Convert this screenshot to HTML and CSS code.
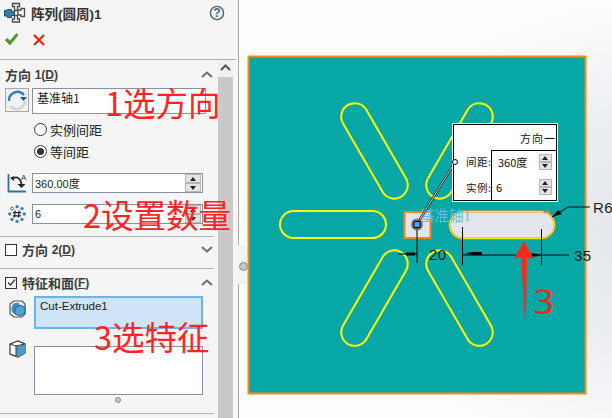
FILE: index.html
```html
<!DOCTYPE html>
<html lang="zh">
<head>
<meta charset="utf-8">
<title>阵列(圆周)1</title>
<link rel="stylesheet" href="styles.css">
</head>
<body>
<div class="app">
  <aside class="panel">
    <header class="panel-head">
      <div class="title-row">
        <svg class="title-icon" width="22" height="21" viewBox="0 0 22 21">
          <path d="M.5 8.500h3V7.500h4V9.500h3v4h-3v2h-4V14h-3z" fill="#2f7fa8" stroke="#1d4f6c"/>
          <path d="M8.500 1.500h7v3h-2v4h-3v-4h-2zM14 8h3V6.500h3.500v8H17V13h-3zM8.500 20v-3h2v-3.500h3V17h2v3z" fill="#f6f6f6" stroke="#4c4c4c" stroke-width="1.300"/>
        </svg>
        <h1 class="title">阵列(圆周)1</h1>
        <svg class="help" width="16" height="16" viewBox="0 0 16 16">
          <circle cx="8" cy="8" r="6.600" fill="#eef2f6" stroke="#55606c" stroke-width="1.400"/>
          <text x="8" y="12" text-anchor="middle" class="help-q">?</text>
        </svg>
      </div>
      <div class="action-row">
        <svg width="15" height="13" viewBox="0 0 15 13"><path d="M1 7l2.500-1.500L6 8l6.500-7.500L14 2 6 12z" fill="#46a01e" stroke="#2f7d12" stroke-width=".5"/></svg>
        <svg class="cancel" width="12" height="12" viewBox="0 0 12 12"><path d="M1 1l10 10M11 1L1 11" stroke="#e0280c" stroke-width="2.200"/></svg>
      </div>
    </header>
    <div class="panel-body">
      <div class="content">
        <section class="group group-one">
          <div class="group-head">
            <span class="group-title">方向 <small>1(<u>D</u>)</small></span>
            <svg class="chev" width="12" height="7" viewBox="0 0 12 7"><path d="M1 6l5-4.500L11 6" fill="none" stroke="#6e6e6e" stroke-width="2"/></svg>
          </div>
          <div class="row">
            <div class="icon-btn">
              <svg width="22" height="22" viewBox="0 0 22 22">
                <path d="M3 12a8.500 8.500 0 0 1 15-6" fill="none" stroke="#2f7fb0" stroke-width="2.400"/>
                <path d="M19 12a8.500 8.500 0 0 1-15 5" fill="none" stroke="#d2d2d2" stroke-width="2.400"/>
                <path d="M14 8h7l-3.500 4z" fill="#1f5f85"/>
              </svg>
            </div>
            <div class="field tall">基准轴1</div>
          </div>
          <label class="radio first"><span class="dot"></span>实例间距</label>
          <label class="radio"><span class="dot on"></span>等间距</label>
          <div class="row num first-num">
            <svg class="num-icon" width="20" height="20" viewBox="0 0 20 20">
              <path d="M1.500 1v17.500H19" fill="none" stroke="#2a74a5" stroke-width="1.800"/>
              <path d="M5 6c4-3 8-2 9.500 5" fill="none" stroke="#222" stroke-width="1.800"/>
              <path d="M3 5l4-2v5zM10.500 11h8l-4 4z" fill="#222"/>
              <text x="14" y="7" class="deg-a">A</text>
            </svg>
            <div class="field spin"><span>360.00度</span><span class="spinner"><i class="up"></i><i class="down"></i></span></div>
          </div>
          <div class="row num second-num">
            <svg class="num-icon" width="20" height="20" viewBox="0 0 22 22">
              <g fill="#3f7ea6">
                <circle cx="11" cy="3" r="1.800"/><circle cx="16.500" cy="5" r="1.800"/><circle cx="19" cy="11" r="1.800"/><circle cx="16.500" cy="17" r="1.800"/><circle cx="11" cy="19" r="1.800"/><circle cx="5.500" cy="17" r="1.800"/><circle cx="3" cy="11" r="1.800"/>
              </g>
              <circle cx="5.500" cy="5" r="1.600" fill="#fff" stroke="#555"/>
              <path d="M9 7l-1 8M13.500 7l-1 8M6.500 9.500h9M6.500 13h9" stroke="#223" stroke-width="1.300"/>
            </svg>
            <div class="field spin"><span>6</span><span class="spinner"><i class="up"></i><i class="down"></i></span></div>
          </div>
        </section>
        <section class="group group-two">
          <div class="group-head">
            <span class="group-title"><span class="box"></span>方向 <small>2(<u>D</u>)</small></span>
            <svg class="chev" width="12" height="7" viewBox="0 0 12 7"><path d="M1 1l5 4.500L11 1" fill="none" stroke="#6e6e6e" stroke-width="2"/></svg>
          </div>
        </section>
        <section class="group group-three">
          <div class="group-head">
            <span class="group-title"><span class="box checked">
              <svg width="9" height="9" viewBox="0 0 9 9"><path d="M1 4.500l2.500 2.500L8 1.500" fill="none" stroke="#333" stroke-width="1.200"/></svg>
            </span>特征和面<small>(<u>F</u>)</small></span>
            <svg class="chev" width="12" height="7" viewBox="0 0 12 7"><path d="M1 6l5-4.500L11 6" fill="none" stroke="#6e6e6e" stroke-width="2"/></svg>
          </div>
          <div class="row list-row">
            <svg class="list-icon first-icon" width="17" height="18" viewBox="0 0 17 18">
              <path d="M5 1h8l3 3v10l-3 3H5l-4-3V4z" fill="#f4f4f4" stroke="#555" stroke-width="1.200"/>
              <path d="M3 6c1-3 4-4 7-3v3l-3 2v6l-3-1C2 11 2 9 3 6z" fill="#3f8dbc"/>
              <path d="M6 8l5-3 5 2v6l-5 3-5-2z" fill="#4ea3d2" stroke="#1f5f85"/>
            </svg>
            <div class="list active">Cut-Extrude1</div>
          </div>
          <div class="row list-row second-list">
            <svg class="list-icon second-icon" width="17" height="18" viewBox="0 0 17 18">
              <path d="M1 4l8-3 7 3v9l-7 4-8-3z" fill="#fff" stroke="#333" stroke-width="1.200"/>
              <path d="M7 6l9-2v9l-7 4-2-1z" fill="#4a9bc9"/>
              <path d="M1 4l6 2 9-2M7 6v10" fill="none" stroke="#333"/>
            </svg>
            <div class="list tall-list"></div>
          </div>
          <div class="grip"></div>
        </section>
      </div>
      <div class="scroll">
        <div class="scroll-up"><svg width="11" height="7" viewBox="0 0 11 7"><path d="M1 6l4.500-4.500L10 6" fill="none" stroke="#555" stroke-width="2"/></svg></div>
        <div class="scroll-thumb"></div>
      </div>
    </div>
  </aside>
  <div class="splitter"><span class="splitter-dot"></span></div>
  <main class="viewport">
    <svg class="drawing" width="373" height="418" viewBox="239 0 373 418">
      <rect x="248.500" y="56.500" width="337" height="337" fill="#06a7a5" stroke="#f98a12" stroke-width="2"/>
      <g fill="none" stroke="#ffff00" stroke-width="2">
        <rect x="280" y="211" width="106" height="27" rx="13.500"/>
        <rect x="449" y="211" width="106" height="27" rx="13.500" transform="rotate(-60 417 224.500)"/>
        <rect x="449" y="211" width="106" height="27" rx="13.500" transform="rotate(60 417 224.500)"/>
        <rect x="449" y="211" width="106" height="27" rx="13.500" transform="rotate(120 417 224.500)"/>
        <rect x="449" y="211" width="106" height="27" rx="13.500" transform="rotate(-120 417 224.500)"/>
      </g>
      <rect x="404.500" y="212" width="26" height="26" fill="#e2e4ee" stroke="#f5821f" stroke-width="2"/>
      <rect x="449.500" y="211.500" width="105" height="27" rx="13.500" fill="#e2e4ee" stroke="#f5921f" stroke-width="2"/>
      <rect x="449.500" y="211.500" width="105" height="27" rx="13.500" fill="none" stroke="#ffee00" stroke-width="1"/>
      <text x="420" y="221" class="axis-label">基准轴1</text>
      <path d="M417 224L455 162" stroke="#000" stroke-width="2.200"/>
      <path d="M417 224L455 162" stroke="#fff" stroke-width=".9"/>
      <path d="M417 224v39M462.500 227v38M541.500 229v36M398 254h19M462 255h107" stroke="#000" fill="none"/>
      <path d="M406 252.500h9v3h-9zM465 253.500l7-1.500h10v3h-10zM531 253.500h5l5 1.500-5 1.500h-5z" fill="#000"/>
      <path d="M552 217l16-10h22" stroke="#000" fill="none"/>
      <path d="M552 217l6-7 4 4z" fill="#000"/>
      <path d="M544 213l3.500-3.500 3.500 3.500" fill="none" stroke="#888" stroke-width="1.500"/>
      <circle cx="417" cy="224.500" r="6" fill="#555" opacity=".75"/>
      <rect x="414" y="221.500" width="6" height="6" fill="#4da3f5" stroke="#000"/>
      <text x="429" y="260" class="dim">20</text>
      <text x="574" y="261" class="dim">35</text>
      <text x="593" y="213" class="dim">R6</text>
      <path d="M524 241l10 18-7-2-1.500 72-4.500-72-7 2z" fill="#fb2a1c"/>
      <text x="534" y="314" class="big-three">3</text>
    </svg>
    <div class="popup">
      <div class="popup-title">方向一</div>
      <div class="popup-left">
        <span>间距:</span>
        <span>实例:</span>
      </div>
      <div class="popup-right">
        <div class="popup-line"><span class="v1">360度</span><span class="spinner small"><i class="up"></i><i class="down"></i></span></div>
        <div class="popup-line"><span>6</span><span class="spinner small"><i class="up"></i><i class="down"></i></span></div>
      </div>
      <span class="handle"></span>
    </div>
  </main>
  <div class="note note-1">1选方向</div>
  <div class="note note-2">2设置数量</div>
  <div class="note note-3">3选特征</div>
</div>
</body>
</html>
```

FILE: styles.css
```css
* { box-sizing: border-box; }
html, body { margin: 0; padding: 0; }
body {
  width: 612px;
  height: 418px;
  overflow: hidden;
  font-family: "Liberation Sans", "Noto Sans CJK SC", sans-serif;
  font-size: 12px;
  color: #222;
}
.app { position: relative; display: flex; width: 612px; height: 418px; overflow: hidden; }

/* Panel */
.panel { width: 238px; height: 418px; background: #f5f5f5; display: flex; flex-direction: column; flex: none; }
.panel-head { height: 60px; border-bottom: 1px solid #adadad; margin-right: 2px; flex: none; }
.title-row { display: flex; align-items: center; height: 26px; padding: 0 11px 1px 4px; }
.title-icon { flex: none; }
.title { margin: 0 0 0 5px; flex: 1; font-size: 13.500px; font-weight: 700; color: #333; white-space: nowrap; }
.help { flex: none; }
.help-q { font-size: 12px; font-weight: 700; fill: #3a6f9a; }
.action-row { display: flex; align-items: center; gap: 14px; padding: 7px 0 0 4px; }
.panel-body { display: flex; flex: 1; min-height: 0; }
.content { width: 218px; flex: none; }
.group { border-bottom: 1px solid #b4b4b4; margin-right: 4px; }
.group-one { height: 177px; }
.group-two { height: 32px; }
.group-three { height: 145px; }
.group-head { display: flex; align-items: center; justify-content: space-between; height: 28px; padding: 1px 1px 0 5px; }
.group-two .group-head { height: 31px; padding: 0 1px 6px 5px; }
.group-three .group-head { height: 27px; padding-top: 0; }
.group-title { display: flex; align-items: center; font-size: 13px; font-weight: 700; color: #3d3d3d; white-space: pre; }
.group-title small { font-size: 12px; }
.chev { flex: none; }
.box { display: inline-flex; align-items: center; justify-content: center; width: 12px; height: 12px; border: 1px solid #333; background: #fff; margin-right: 5px; flex: none; }
.box.checked { background: transparent; }

.row { display: flex; align-items: flex-start; }
.icon-btn { width: 24px; height: 24px; margin: 0 3px 0 5px; border: 1px solid #a8a8a8; background: #f0f0f0; flex: none; display: flex; align-items: center; justify-content: center; }
.field { background: #fff; border: 1px solid #8990a3; font-size: 12px; }
.field.tall { width: 174px; height: 26px; padding: 1px 0 0 4px; font-family: "Noto Sans CJK SC", sans-serif; line-height: 16px; }
.radio { display: flex; align-items: center; height: 22px; padding-left: 34px; font-family: "Noto Sans CJK SC", sans-serif; font-size: 13px; }
.radio.first { margin-top: 4px; }
.dot { width: 13px; height: 13px; border: 1px solid #333; border-radius: 50%; background: #fff; margin-right: 3px; position: relative; flex: none; }
.dot.on::after { content: ""; position: absolute; left: 2px; top: 2px; width: 7px; height: 7px; border-radius: 50%; background: #333; }
.num { height: 20px; }
.first-num { margin-top: 11px; }
.second-num { margin-top: 11px; }
.num-icon { margin: 0 5px 0 7px; flex: none; }
.field.spin { width: 171px; height: 20px; display: flex; align-items: center; justify-content: space-between; padding: 0 1px 0 2px; font-size: 11px; }

.spinner { display: flex; flex-direction: column; width: 16px; height: 18px; flex: none; }
.spinner i { flex: 1; background: #e4e4e4; border: 1px solid #b6b6b6; position: relative; display: block; }
.spinner i::after { content: ""; position: absolute; left: 4px; border-left: 3.500px solid transparent; border-right: 3.500px solid transparent; }
.spinner .up::after { top: 2px; border-bottom: 4px solid #222; }
.spinner .down::after { top: 2px; border-top: 4px solid #222; }
.spinner.small { width: 13px; height: 16px; }
.spinner.small i::after { left: 2px; top: 1px; }

.list-row { padding-left: 9px; }
.list-icon { margin-right: 8px; flex: none; }
.first-icon { margin-top: 4px; }
.second-icon { margin-top: -6px; }
.list { width: 169px; background: #fff; border: 1px solid #8990a3; }
.list.active { height: 33px; background: #cfe4f7; border: 2px solid #6cb4e6; padding: 2px 0 0 4px; font-size: 11.500px; color: #222; }
.second-list { margin-top: 17px; }
.tall-list { height: 49px; }
.grip { width: 6px; height: 6px; border-radius: 50%; background: #c8c8c8; border: 1px solid #888; margin: 2px 0 0 115px; }

.scroll { width: 15px; background: #f0f0f0; flex: none; display: flex; flex-direction: column; margin-right: 5px; }
.scroll-up { height: 17px; display: flex; align-items: center; justify-content: center; padding-bottom: 2px; }
.scroll-thumb { flex: 1; background: #c9c9c9; }

/* Splitter */
.splitter { width: 1px; height: 418px; background: #a8a8a8; flex: none; }
.splitter-dot { position: absolute; z-index: 2; left: 238px; top: 245px; width: 9px; height: 39px; background: #f4f4f4; }
.splitter-dot::after { content: ""; position: absolute; left: 1px; top: 17px; width: 7px; height: 7px; border-radius: 50%; background: #c4c4c4; border: 1px solid #8c8c8c; }

/* Viewport */
.viewport { position: relative; flex: 1; height: 418px; background: radial-gradient(ellipse 420px 240px at 500px 230px, #dfe2ea 0%, #eceef2 55%, #fdfdfd 100%); }
.drawing { display: block; }
.axis-label { font-family: "Liberation Serif", "Noto Sans CJK SC", serif; font-size: 14.500px; fill: #6cbce8; }
.dim { font-family: "Liberation Sans", sans-serif; font-size: 15px; fill: #1a1a1a; letter-spacing: .5px; }
.big-three { font-family: "Noto Sans", sans-serif; font-size: 35px; fill: #f5281c; }
.deg-a { font-family: "Liberation Sans", sans-serif; font-size: 8px; fill: #333; }

/* Popup dialog in the drawing */
.popup { position: absolute; left: 214px; top: 124px; width: 104px; height: 77px; background: #fff; border: 1px solid #000; outline: 1px solid #fff; font-family: "Noto Sans CJK SC", sans-serif; font-size: 11px; color: #111; }
.popup-title { text-align: right; padding: 4px 0 0 0; line-height: 18px; letter-spacing: 1px; }
.popup-left { position: absolute; left: 12px; top: 28px; display: flex; flex-direction: column; gap: 8px; line-height: 18px; font-size: 10.500px; letter-spacing: .5px; }
.popup-right { position: absolute; left: 37px; top: 25px; right: 0; bottom: 0; border-left: 1px solid #000; border-top: 1px solid #000; padding: 3px 4px 0 3px; display: flex; flex-direction: column; gap: 9px; }
.popup-line { display: flex; justify-content: space-between; align-items: center; height: 16px; font-size: 11px; padding-left: 1px; }
.v1 { padding-left: 2px; }
.handle { position: absolute; left: -2px; top: 34px; width: 6px; height: 6px; border-radius: 50%; background: #fff; border: 1px solid #000; }

/* Red hand-written notes lying over the panel */
.note { position: absolute; font-family: "Noto Sans CJK SC", sans-serif; font-weight: 400; font-size: 32.500px; line-height: 34px; color: #ff2323; white-space: nowrap; }
.note-1 { left: 105px; top: 85px; }
.note-2 { left: 83px; top: 197px; }
.note-3 { left: 94px; top: 319px; }
```
